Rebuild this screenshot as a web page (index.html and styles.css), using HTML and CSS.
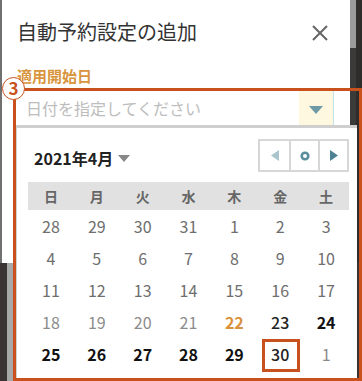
FILE: index.html
```html
<!DOCTYPE html>
<html lang="ja">
<head>
<meta charset="utf-8">
<title>自動予約設定の追加</title>
<link rel="stylesheet" href="styles.css">
</head>
<body>
<div class="stage">
  <div class="top-row">
    <div class="edge-left"></div>
    <div class="panel">
      <div class="panel-head">
        <h1 class="title">自動予約設定の追加</h1>
        <svg class="close" width="18" height="18" viewBox="0 0 18 18"><path d="M2 2 L16 16 M16 2 L2 16" stroke="#666" stroke-width="2" fill="none"/></svg>
      </div>
      <div class="label">適用開始日</div>
      <div class="field">
        <span class="placeholder">日付を指定してください</span>
        <span class="field-btn"><svg width="14" height="8" viewBox="0 0 14 8"><path d="M0 0 H14 L7 8 Z" fill="#6e9aa6"/></svg></span>
      </div>
    </div>
    <div class="scrollbar"><div class="thumb"></div></div>
    <div class="edge-right"></div>
  </div>
  <div class="bottom-row">
    <div class="dark-strip"></div>
    <div class="gray-strip"></div>
  </div>
</div>

<div class="dropdown">
  <div class="cal-head">
    <div class="month">2021年4月<svg class="month-caret" width="12" height="7" viewBox="0 0 12 7"><path d="M0 0 H12 L6 7 Z" fill="#888"/></svg></div>
    <div class="nav">
      <span class="nav-btn"><svg width="8" height="11" viewBox="0 0 8 11"><path d="M8 0 V11 L0 5.5 Z" fill="#a9c5cd"/></svg></span>
      <span class="nav-btn"><svg width="10" height="10" viewBox="0 0 10 10"><circle cx="5" cy="5" r="3.3" fill="none" stroke="#5c8d9c" stroke-width="2.6"/></svg></span>
      <span class="nav-btn"><svg width="8" height="11" viewBox="0 0 8 11"><path d="M0 0 V11 L8 5.5 Z" fill="#4d8295"/></svg></span>
    </div>
  </div>
  <div class="weekdays">
    <span>日</span><span>月</span><span>火</span><span>水</span><span>木</span><span>金</span><span>土</span>
  </div>
  <div class="days">
    <span class="d-old">28</span><span class="d-old">29</span><span class="d-old">30</span><span class="d-old">31</span><span class="d-old">1</span><span class="d-old">2</span><span class="d-old">3</span>
    <span class="d-old">4</span><span class="d-old">5</span><span class="d-old">6</span><span class="d-old">7</span><span class="d-old">8</span><span class="d-old">9</span><span class="d-old">10</span>
    <span class="d-old">11</span><span class="d-old">12</span><span class="d-old">13</span><span class="d-old">14</span><span class="d-old">15</span><span class="d-old">16</span><span class="d-old">17</span>
    <span class="d-dis">18</span><span class="d-dis">19</span><span class="d-dis">20</span><span class="d-dis">21</span><span class="d-today">22</span><span class="d-on">23</span><span class="d-on d-bold">24</span>
    <span class="d-on d-bold">25</span><span class="d-on d-bold">26</span><span class="d-on d-bold">27</span><span class="d-on d-bold">28</span><span class="d-on d-bold">29</span><span class="d-on">30</span><span class="d-next">1</span>
  </div>
</div>

<div class="annot-box"></div>
<div class="annot-num">3</div>
<div class="annot-day"></div>
</body>
</html>
```

FILE: styles.css
```css
* { box-sizing: border-box; }
html, body { margin: 0; padding: 0; }
body {
  width: 362px;
  height: 381px;
  overflow: hidden;
  position: relative;
  font-family: "Noto Sans CJK JP", "Noto Sans", sans-serif;
  background: #3a3532;
}
.stage {
  width: 362px;
  height: 381px;
  display: flex;
  flex-direction: column;
}
.top-row {
  display: flex;
  height: 263px;
}
.edge-left { width: 2px; background: #707070; }
.panel {
  width: 348px;
  background: #fff;
  display: flex;
  flex-direction: column;
}
.panel-head {
  display: flex;
  justify-content: space-between;
  align-items: center;
  padding: 18px 21px 0 15px;
}
.title {
  margin: 0;
  font-size: 20px;
  line-height: 28px;
  font-weight: 400;
  color: #333;
}
.close { margin-top: 1px; }
.label {
  margin: 20px 0 0 15px;
  font-size: 15px;
  line-height: 20px;
  font-weight: 700;
  color: #d8953d;
}
.field {
  margin: 4px 0 0 12px;
  width: 320px;
  height: 36px;
  border: 1px solid #bfe5ea;
  display: flex;
  align-items: center;
}
.placeholder {
  flex: 1;
  padding-left: 11px;
  font-size: 16px;
  color: #bdbdbd;
}
.field-btn {
  width: 34px;
  height: 100%;
  background: #fdf8df;
  display: flex;
  align-items: center;
  justify-content: center;
  padding-top: 3px;
}
.scrollbar {
  width: 6px;
  background: #3c3a39;
}
.thumb { height: 48px; background: #9b9b9b; }
.edge-right { flex: 1; background: #2f2d2c; }
.bottom-row {
  flex: 1;
  display: flex;
}
.dark-strip { width: 7px; background: #3a3532; }
.gray-strip { width: 6px; background: #a8a8a8; }

/* dropdown calendar (overlay) */
.dropdown {
  position: absolute;
  left: 16px;
  top: 125px;
  width: 341px;
  height: 260px;
  background: #fff;
  border-top: 3px solid #cfcfcf;
  border-left: 1px solid #d0d0d0;
  padding: 11px 8px 0 11px;
}
.cal-head {
  display: flex;
  justify-content: space-between;
  align-items: center;
  height: 33px;
}
.month {
  padding: 4px 0 0 6px;
  font-size: 16px;
  font-weight: 700;
  color: #222;
  display: flex;
  align-items: center;
}
.month-caret { margin-left: 5px; margin-top: 2px; }
.nav {
  display: flex;
  border: 2px solid #d7d7d7;
  height: 33px;
}
.nav-btn {
  width: 29px;
  display: flex;
  align-items: center;
  justify-content: center;
}
.nav-btn + .nav-btn { border-left: 2px solid #d7d7d7; }
.weekdays {
  margin-top: 10px;
  height: 28px;
  background: #e1e1e1;
  display: grid;
  grid-template-columns: repeat(7, 1fr);
  align-items: center;
  text-align: center;
  font-size: 14px;
  font-weight: 700;
  color: #666;
}
.days {
  display: grid;
  grid-template-columns: repeat(7, 1fr);
  grid-auto-rows: 32px;
  align-items: center;
  text-align: center;
  font-size: 16px;
}
.d-old { color: #6e6e6e; }
.d-dis { color: #8c8c8c; }
.d-today { color: #d9913a; font-weight: 700; }
.d-on { color: #222; font-weight: 500; }
.d-bold { font-weight: 700; color: #111; }
.d-next { color: #8a8a8a; }

/* annotation overlays */
.annot-box {
  position: absolute;
  left: 13px;
  top: 88px;
  width: 349px;
  height: 293px;
  border: 3px solid #c9511d;
}
.annot-num {
  position: absolute;
  left: 2px;
  top: 77px;
  width: 23px;
  height: 23px;
  border: 1.5px solid #c9511d;
  border-radius: 50%;
  background: #fff;
  color: #c9511d;
  font-size: 17px;
  font-weight: 700;
  line-height: 19px;
  text-align: center;
}
.annot-day {
  position: absolute;
  left: 262px;
  top: 339px;
  width: 38px;
  height: 33px;
  border: 3px solid #c9511d;
}
```
